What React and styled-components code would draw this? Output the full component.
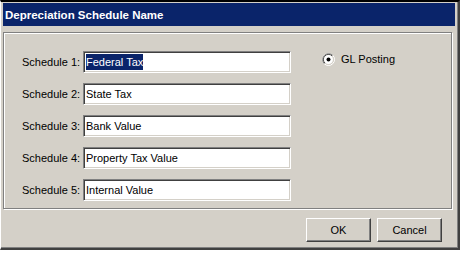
import React from 'react';
import styled, { createGlobalStyle } from 'styled-components';

const GlobalStyle = createGlobalStyle`
  body {
    margin: 0;
    background: #ffffff;
    font-family: "Liberation Sans", Arial, sans-serif;
  }
`

const schedules = [
  { label: 'Schedule 1:', value: 'Federal Tax', selected: true },
  { label: 'Schedule 2:', value: 'State Tax' },
  { label: 'Schedule 3:', value: 'Bank Value' },
  { label: 'Schedule 4:', value: 'Property Tax Value' },
  { label: 'Schedule 5:', value: 'Internal Value' },
];

const RadioIcon = () => (
  <svg width="13" height="13" viewBox="0 0 13 13">
    <circle cx="6.5" cy="6.5" r="6" fill="none" stroke="#ffffff" strokeWidth="1" />
    <path d="M2.26 10.74 A6 6 0 0 1 10.74 2.26" fill="none" stroke="#808080" strokeWidth="1" />
    <circle cx="6.5" cy="6.5" r="5" fill="none" stroke="#d4d0c8" strokeWidth="1" />
    <path d="M2.96 10.04 A5 5 0 0 1 10.04 2.96" fill="none" stroke="#404040" strokeWidth="1" />
    <circle cx="6.5" cy="6.5" r="4.5" fill="#ffffff" />
    <circle cx="6.5" cy="6.5" r="2" fill="#000000" />
  </svg>
);

const Dialog = () => {
  return (
    <Window>
      <GlobalStyle />
      <TitleBar>Depreciation Schedule Name</TitleBar>
      <GroupBox>
        <FieldList>
          {schedules.map((s) => (
            <FieldRow key={s.label}>
              <Label>{s.label}</Label>
              <TextField>
                {s.selected ? <Selection>{s.value}</Selection> : s.value}
              </TextField>
            </FieldRow>
          ))}
        </FieldList>
        <RadioRow>
          <RadioIcon />
          <span>GL Posting</span>
        </RadioRow>
      </GroupBox>
      <ButtonBar>
        <Button>OK</Button>
        <Button>Cancel</Button>
      </ButtonBar>
    </Window>
  )
}

const Window = styled.div`
  width: 460px;
  height: 250px;
  box-sizing: border-box;
  background: #d4d0c8;
  border-top: 2px solid #000000;
  border-left: 1px solid #ffffff;
  border-right: 2px solid #404040;
  border-bottom: 2px solid #404040;
  box-shadow: inset -1px -1px 0 #808080;
  padding: 1px 3px 0 2px;
  display: flex;
  flex-direction: column;
  font-size: 11px;
  color: #000000;
`
const TitleBar = styled.div`
  height: 23px;
  flex-shrink: 0;
  background: #0a246a;
  color: #ffffff;
  font-weight: bold;
  font-size: 11.5px;
  padding-left: 2px;
  display: flex;
  align-items: center;
`
const GroupBox = styled.div`
  margin-top: 6px;
  width: 449px;
  height: 177px;
  box-sizing: border-box;
  border: 1px solid #808080;
  box-shadow: inset 1px 1px 0 #ffffff, 1px 1px 0 #ffffff;
  display: flex;
  flex-direction: row;
`
const FieldList = styled.div`
  display: flex;
  flex-direction: column;
  gap: 10px;
  padding: 18px 0 0 18px;
`
const FieldRow = styled.div`
  display: flex;
  flex-direction: row;
  align-items: center;
`
const Label = styled.span`
  width: 61px;
`
const TextField = styled.div`
  width: 208px;
  height: 22px;
  box-sizing: border-box;
  background: #ffffff;
  border-top: 1px solid #808080;
  border-left: 1px solid #808080;
  border-bottom: 1px solid #ffffff;
  border-right: 1px solid #ffffff;
  box-shadow: inset 1px 1px 0 #404040, inset -1px -1px 0 #d4d0c8;
  padding-left: 2px;
  display: flex;
  align-items: center;
  white-space: nowrap;
`
const Selection = styled.span`
  background: #0a246a;
  color: #ffffff;
  line-height: 16px;
  display: inline-block;
`
const RadioRow = styled.div`
  display: flex;
  align-items: center;
  gap: 6px;
  height: 16px;
  margin: 18px 0 0 31px;
`
const ButtonBar = styled.div`
  display: flex;
  justify-content: flex-end;
  gap: 6px;
  margin-top: 9px;
  padding-right: 13px;
`
const Button = styled.button`
  width: 65px;
  height: 24px;
  box-sizing: border-box;
  background: #d4d0c8;
  border-top: 1px solid #ffffff;
  border-left: 1px solid #ffffff;
  border-right: 1px solid #404040;
  border-bottom: 1px solid #404040;
  box-shadow: inset -1px -1px 0 #808080;
  font-family: "Liberation Sans", Arial, sans-serif;
  font-size: 11px;
  color: #000000;
  padding: 0;
`

export default Dialog;
